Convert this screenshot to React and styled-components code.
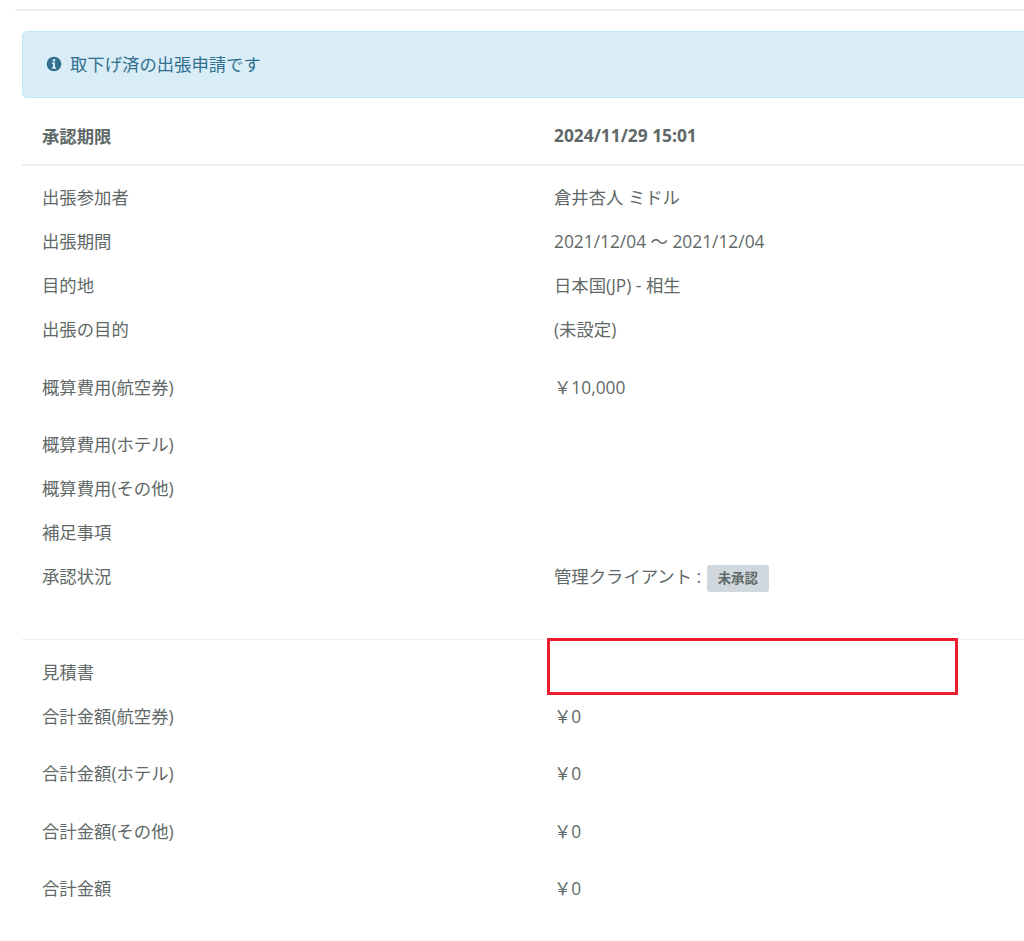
import React from "react";
import styled, { createGlobalStyle } from "styled-components";

const Global = createGlobalStyle`
  html, body { margin: 0; padding: 0; background: #fff; overflow: hidden; }
  #root { width: 1024px; height: 941px; overflow: hidden; }
`;

const Page = styled.div`
  position: relative;
  width: 1100px;
  height: 941px;
  padding-top: 9px;
  box-sizing: border-box;
  font-family: "Open Sans", "Noto Sans CJK JP", sans-serif;
  font-size: 17.35px;
  color: #5f6967;
`;

const TopRule = styled.hr`
  margin: 0 0 20px 15px;
  border: 0;
  border-top: 2px solid #eeeeee;
`;

const Alert = styled.div`
  display: flex;
  align-items: center;
  gap: 8px;
  height: 67px;
  box-sizing: border-box;
  margin-left: 22px;
  padding: 0 0 3px 23px;
  background: #d9edf7;
  border: 1px solid #bce8f1;
  border-radius: 5px;
  color: #31708f;
`;

const InfoIcon = styled.svg`
  width: 16px;
  height: 16px;
  margin-top: 1px;
  flex: none;
  fill: #31708f;
`;

const Table = styled.div`
  margin-left: 22px;
`;

const Row = styled.div`
  display: grid;
  grid-template-columns: 512px 1fr;
  align-items: center;
  height: ${(p) => p.$h}px;
  box-sizing: border-box;
  padding-left: 20px;
  padding-top: ${(p) => p.$pt || 0}px;
  padding-bottom: ${(p) => p.$pb || 0}px;
  font-weight: ${(p) => (p.$bold ? 700 : 400)};
  border-bottom: ${(p) => (p.$rule ? `${p.$rule}px solid #eeeeee` : "0")};
`;

const Cell = styled.div`
  display: flex;
  align-items: center;
  white-space: pre;
`;

const Badge = styled.span`
  display: inline-block;
  margin: 6px 0 0 1px;
  padding: 0 11px;
  height: 27px;
  line-height: 27px;
  border-radius: 3px;
  background: #d0d8dd;
  color: #5f6967;
  font-size: 13.4px;
  font-weight: 700;
`;

const Annotation = styled.div`
  position: absolute;
  left: 547px;
  top: 638px;
  width: 411px;
  height: 57px;
  box-sizing: border-box;
  border: 3px solid #ed1c2e;
`;

const rows = [
  { label: "出張参加者", value: "倉井杏人 ミドル", h: 44 },
  { label: "出張期間", value: "2021/12/04 〜 2021/12/04", h: 44 },
  { label: "目的地", value: "日本国(JP) - 相生", h: 44 },
  { label: "出張の目的", value: "(未設定)", h: 44 },
  { label: "概算費用(航空券)", value: "￥10,000", h: 72 },
  { label: "概算費用(ホテル)", value: "", h: 43.5 },
  { label: "概算費用(その他)", value: "", h: 44 },
  { label: "補足事項", value: "", h: 44 },
];

const lower = [
  { label: "見積書", value: "", h: 44 },
  { label: "合計金額(航空券)", value: "￥0", h: 57.5, pb: 13.5 },
  { label: "合計金額(ホテル)", value: "￥0", h: 57.5, pb: 13.5 },
  { label: "合計金額(その他)", value: "￥0", h: 57.5, pb: 13.5 },
  { label: "合計金額", value: "￥0", h: 57.5, pb: 13.5 },
];

export default function App() {
  return (
    <Page>
      <Global />
      <TopRule />
      <Alert>
        <InfoIcon viewBox="0 0 24 24" aria-hidden="true">
          <path d="M12 1a11 11 0 1 0 0 22 11 11 0 0 0 0-22zm-1.9 3.8h3.8v3.4h-3.8V4.8zm5 14.2H8.9v-2.3h1.6v-4.6H8.9V9.8h4.6v6.9h1.6V19z" />
        </InfoIcon>
        取下げ済の出張申請です
      </Alert>
      <Table>
        <Row $h={68} $pt={8} $bold $rule={2}>
          <Cell>承認期限</Cell>
          <Cell>2024/11/29 15:01</Cell>
        </Row>
        <Row $h={8} />
        {rows.map((r) => (
          <Row key={r.label} $h={r.h}>
            <Cell>{r.label}</Cell>
            <Cell>{r.value}</Cell>
          </Row>
        ))}
        <Row $h={86.5} $pb={41} $rule={1}>
          <Cell>承認状況</Cell>
          <Cell>
            {"管理クライアント : "}<Badge>未承認</Badge>
          </Cell>
        </Row>
        <Row $h={9} />
        {lower.map((r) => (
          <Row key={r.label} $h={r.h} $pb={r.pb}>
            <Cell>{r.label}</Cell>
            <Cell>{r.value}</Cell>
          </Row>
        ))}
      </Table>
      <Annotation />
    </Page>
  );
}
